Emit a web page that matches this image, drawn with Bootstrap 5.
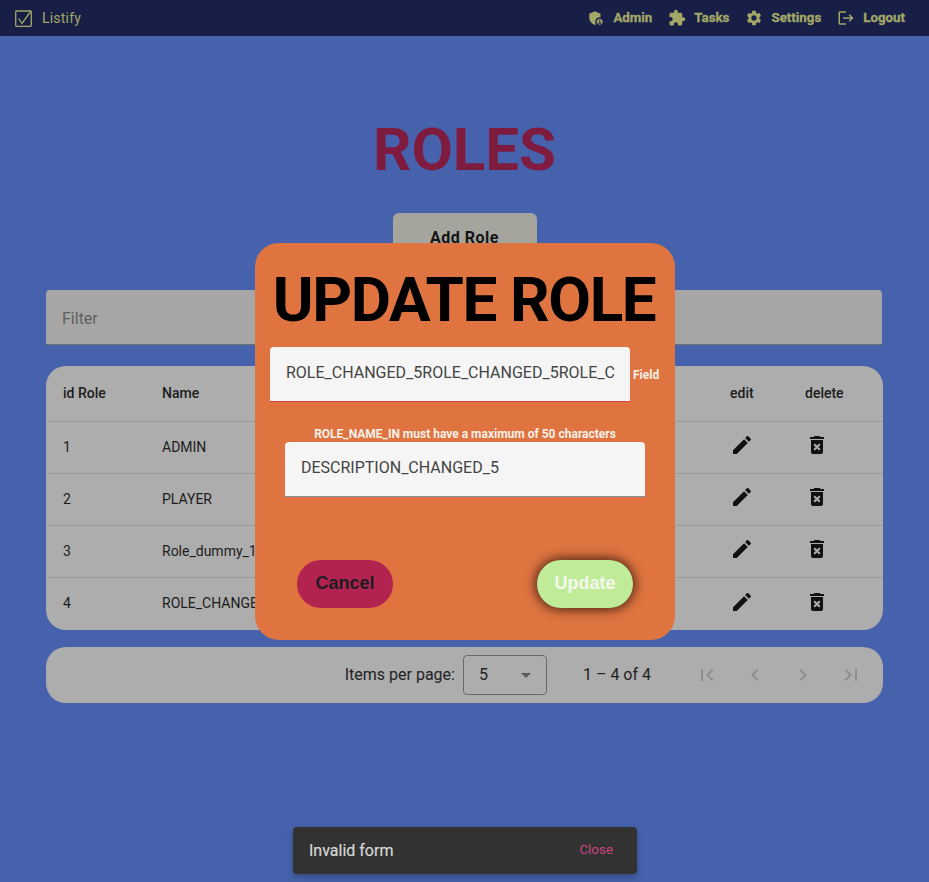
<!DOCTYPE html>
<html lang="en">
<head>
    <meta charset="UTF-8">
    <meta name="viewport" content="width=device-width, initial-scale=1.0">
    <title>Listify</title>
    <link href="https://cdn.jsdelivr.net/npm/bootstrap@5.3.0/dist/css/bootstrap.min.css" rel="stylesheet">
    <style>
        body {
            background-color: #4662ac;
            font-family: Roboto, sans-serif;
            color: #141414;
            height: 882px;
            overflow: hidden;
        }
        .top-bar {
            background-color: #171f47;
            height: 36px;
            padding: 0 24px 0 15px;
            color: #a3a768;
        }
        .brand-text { font-size: 14px; margin-left: 10px; letter-spacing: .2px; }
        .top-link { font-size: 13.3px; font-weight: 700; color: #a3a768; text-decoration: none; gap: 8px; -webkit-text-stroke: .3px #a3a768; }
        .top-link svg { width: 18px; height: 18px; fill: #a3a768; }
        .top-links { gap: 16px; }
        .page-wrap { padding: 0 46px; }
        .page-title {
            font-size: 60px;
            font-weight: 700;
            color: #7e1b3f;
            line-height: 70px;
            margin: 79px 0 28px;
        }
        .add-btn {
            width: 144px;
            height: 50px;
            background-color: #a5a59d;
            border: 0;
            border-radius: 6px;
            font-weight: 700;
            font-size: 16px;
            color: #141414;
            letter-spacing: .5px;
        }
        .filter-box {
            width: 836px;
            height: 55px;
            margin-top: 27px;
            background-color: #a6a6a6;
            border-bottom: 1px solid #6f6f6f;
            border-radius: 4px 4px 0 0;
            padding: 3px 16px 0;
            font-size: 16px;
            color: #5f5f5f;
        }
        .roles-table {
            margin: 21px 0 17px;
            background-color: #adadad;
            border-radius: 20px;
            overflow: hidden;
            width: 837px;
        }
        .roles-table table { margin: 0; font-size: 14px; table-layout: fixed; --bs-table-bg: transparent; --bs-table-color: #1c1c1c; }
        .roles-table th { font-weight: 500; height: 55px; }
        .roles-table td { height: 52px; }
        .roles-table th, .roles-table td { padding: 0 0 0 17px; vertical-align: middle; border-color: #9a9a9a; }
        .roles-table tr:last-child td { border-bottom: 0; height: 53px; }
        .row-icon { width: 24px; height: 24px; fill: #111; display: block; margin-top: -5px; }
        .roles-table tr:last-child .row-icon { margin-top: -4px; }
        .pager-bar {
            width: 837px;
            height: 56px;
            background-color: #adadad;
            border-radius: 20px;
            font-size: 16px;
            padding-right: 20px;
            color: #222;
        }
        .page-size {
            width: 84px;
            height: 40px;
            border: 1px solid #6b6b6b;
            border-radius: 4px;
            margin: 0 36px 0 8px;
            padding: 0 15px;
        }
        .page-caret { border-left: 5px solid transparent; border-right: 5px solid transparent; border-top: 5px solid #5a5a5a; }
        .page-icons { gap: 24px; margin-left: 44px; }
        .page-icons svg { width: 24px; height: 24px; fill: #8e8e8e; display: block; }
        .update-dialog {
            position: absolute;
            left: 255px;
            top: 243px;
            width: 420px;
            height: 397px;
            background-color: #df7440;
            border-radius: 24px;
            padding: 0 15px;
        }
        .dialog-title {
            font-size: 62px;
            font-weight: 700;
            letter-spacing: -1.4px;
            color: #000;
            line-height: 78px;
            margin: 18px 2px 8px 0;
            white-space: nowrap;
        }
        .field-box {
            width: 360px;
            height: 55px;
            background-color: #f5f5f5;
            border-radius: 4px 4px 0 0;
            padding: 0 16px 2px;
            font-size: 16px;
            color: #444;
            overflow: hidden;
            white-space: nowrap;
        }
        .field-name { border-bottom: 1px solid #d6413a; }
        .field-desc { border-bottom: 1px solid #7f8fa6; margin-left: 15px; }
        .field-hint { font-size: 12px; font-weight: 700; color: #f7f0e8; margin: 0 0 0 3px; }
        .field-error { font-size: 12px; font-weight: 700; color: #f7f0e8; text-align: center; margin-top: 26px; line-height: 13px; height: 13px; margin-bottom: 1px; }
        .dialog-actions { padding: 0 27px; margin-top: 63px; }
        .pill-btn {
            width: 96px;
            height: 48px;
            border: 0;
            border-radius: 24px;
            font-family: "Liberation Sans", Arial, sans-serif;
            font-size: 18px;
            font-weight: 700;
            padding: 0 0 2px;
        }
        .pill-cancel { background-color: #b32350; color: #1c1c24; }
        .pill-update { background-color: #c0ec99; color: #f4f8ec; box-shadow: 0 0 11px 2px rgba(40, 20, 10, .8); }
        .snack-bar {
            position: absolute;
            left: 293px;
            top: 827px;
            width: 344px;
            height: 47px;
            background-color: #323232;
            border-radius: 4px;
            padding: 0 24px 0 16px;
            box-shadow: 0 3px 6px rgba(0, 0, 0, .25);
            color: #d8d8d8;
            font-size: 16px;
        }
        .snack-bar > span:first-child { -webkit-text-stroke: .2px #d8d8d8; }
        .snack-close { font-size: 13.4px; color: #cb4480; }
    </style>
</head>
<body>
    <nav class="top-bar d-flex align-items-center justify-content-between">
        <div class="d-flex align-items-center">
            <svg width="17" height="17" viewBox="0 0 17 17" fill="none" stroke="#a3a768" stroke-width="1.3">
                <rect x=".7" y="1" width="15.6" height="15.3" rx="1"/>
                <path d="M3.5 8.5l3.5 5L16 1"/>
            </svg>
            <span class="brand-text">Listify</span>
        </div>
        <div class="top-links d-flex align-items-center">
            <a class="top-link d-flex align-items-center" href="#">
                <svg viewBox="0 0 24 24"><path d="M17 11c.34 0 .67.04 1 .09V6.27L10.5 3 3 6.27v4.91c0 4.54 3.2 8.79 7.5 9.82.55-.13 1.08-.32 1.6-.55-.69-.98-1.1-2.17-1.1-3.45 0-3.31 2.69-6 6-6z"/><path d="M17 13c-2.21 0-4 1.79-4 4s1.79 4 4 4 4-1.79 4-4-1.79-4-4-4zm0 1.38c.62 0 1.12.51 1.12 1.12s-.51 1.12-1.12 1.12-1.12-.51-1.12-1.12.5-1.12 1.12-1.12zm0 5.37c-.93 0-1.74-.46-2.24-1.17.05-.72 1.51-1.08 2.24-1.08s2.19.36 2.24 1.08c-.5.71-1.31 1.17-2.24 1.17z"/></svg>
                Admin
            </a>
            <a class="top-link d-flex align-items-center" href="#">
                <svg viewBox="0 0 24 24"><path d="M20.5 11H19V7c0-1.1-.9-2-2-2h-4V3.5C13 2.12 11.88 1 10.5 1S8 2.12 8 3.5V5H4c-1.1 0-1.99.9-1.99 2v3.8H3.5c1.49 0 2.7 1.21 2.7 2.7s-1.21 2.7-2.7 2.7H2V20c0 1.1.9 2 2 2h3.8v-1.5c0-1.49 1.21-2.7 2.7-2.7 1.49 0 2.7 1.21 2.7 2.7V22H17c1.1 0 2-.9 2-2v-4h1.5c1.38 0 2.5-1.12 2.5-2.5S21.88 11 20.5 11z"/></svg>
                Tasks
            </a>
            <a class="top-link d-flex align-items-center" href="#">
                <svg viewBox="0 0 24 24"><path d="M19.14 12.94c.04-.3.06-.61.06-.94 0-.32-.02-.64-.07-.94l2.03-1.58c.18-.14.23-.41.12-.61l-1.92-3.32c-.12-.22-.37-.29-.59-.22l-2.39.96c-.5-.38-1.03-.7-1.62-.94l-.36-2.54c-.04-.24-.24-.41-.48-.41h-3.84c-.24 0-.43.17-.47.41l-.36 2.54c-.59.24-1.13.57-1.62.94l-2.39-.96c-.22-.08-.47 0-.59.22L2.74 8.87c-.12.21-.08.47.12.61l2.03 1.58c-.05.3-.09.63-.09.94s.02.64.07.94l-2.03 1.58c-.18.14-.23.41-.12.61l1.92 3.32c.12.22.37.29.59.22l2.39-.96c.5.38 1.03.7 1.62.94l.36 2.54c.05.24.24.41.48.41h3.84c.24 0 .44-.17.47-.41l.36-2.54c.59-.24 1.13-.56 1.62-.94l2.39.96c.22.08.47 0 .59-.22l1.92-3.32c.12-.22.07-.47-.12-.61l-2.01-1.58zM12 15.6c-1.98 0-3.6-1.62-3.6-3.6s1.62-3.6 3.6-3.6 3.6 1.62 3.6 3.6-1.62 3.6-3.6 3.6z"/></svg>
                Settings
            </a>
            <a class="top-link d-flex align-items-center" href="#">
                <svg viewBox="0 0 24 24"><path d="M17 7l-1.41 1.41L18.17 11H8v2h10.17l-2.58 2.58L17 17l5-5zM4 5h8V3H4c-1.1 0-2 .9-2 2v14c0 1.1.9 2 2 2h8v-2H4V5z"/></svg>
                Logout
            </a>
        </div>
    </nav>

    <div class="page-wrap">
        <h1 class="page-title text-center">ROLES</h1>
        <div class="text-center"><button class="add-btn">Add Role</button></div>
        <div class="filter-box d-flex align-items-center">Filter</div>
        <div class="roles-table">
            <table class="table">
                <colgroup>
                    <col style="width: 99px"><col style="width: 568px"><col style="width: 75px"><col>
                </colgroup>
                <thead>
                    <tr><th>id Role</th><th>Name</th><th>edit</th><th>delete</th></tr>
                </thead>
                <tbody>
                    <tr>
                        <td>1</td><td>ADMIN</td>
                        <td><svg class="row-icon" viewBox="0 0 24 24"><path d="M3 17.25V21h3.75L17.81 9.94l-3.75-3.75L3 17.25zM20.71 7.04c.39-.39.39-1.02 0-1.41l-2.34-2.34c-.39-.39-1.02-.39-1.41 0l-1.83 1.83 3.75 3.75 1.83-1.83z"/></svg></td>
                        <td><svg class="row-icon" viewBox="0 0 24 24"><path d="M6 19c0 1.1.9 2 2 2h8c1.1 0 2-.9 2-2V7H6v12zm2.46-7.12l1.41-1.41L12 12.59l2.12-2.12 1.41 1.41L13.41 14l2.12 2.12-1.41 1.41L12 15.41l-2.12 2.12-1.41-1.41L10.59 14l-2.13-2.12zM15.5 4l-1-1h-5l-1 1H5v2h14V4z"/></svg></td>
                    </tr>
                    <tr>
                        <td>2</td><td>PLAYER</td>
                        <td><svg class="row-icon" viewBox="0 0 24 24"><path d="M3 17.25V21h3.75L17.81 9.94l-3.75-3.75L3 17.25zM20.71 7.04c.39-.39.39-1.02 0-1.41l-2.34-2.34c-.39-.39-1.02-.39-1.41 0l-1.83 1.83 3.75 3.75 1.83-1.83z"/></svg></td>
                        <td><svg class="row-icon" viewBox="0 0 24 24"><path d="M6 19c0 1.1.9 2 2 2h8c1.1 0 2-.9 2-2V7H6v12zm2.46-7.12l1.41-1.41L12 12.59l2.12-2.12 1.41 1.41L13.41 14l2.12 2.12-1.41 1.41L12 15.41l-2.12 2.12-1.41-1.41L10.59 14l-2.13-2.12zM15.5 4l-1-1h-5l-1 1H5v2h14V4z"/></svg></td>
                    </tr>
                    <tr>
                        <td>3</td><td>Role_dummy_1</td>
                        <td><svg class="row-icon" viewBox="0 0 24 24"><path d="M3 17.25V21h3.75L17.81 9.94l-3.75-3.75L3 17.25zM20.71 7.04c.39-.39.39-1.02 0-1.41l-2.34-2.34c-.39-.39-1.02-.39-1.41 0l-1.83 1.83 3.75 3.75 1.83-1.83z"/></svg></td>
                        <td><svg class="row-icon" viewBox="0 0 24 24"><path d="M6 19c0 1.1.9 2 2 2h8c1.1 0 2-.9 2-2V7H6v12zm2.46-7.12l1.41-1.41L12 12.59l2.12-2.12 1.41 1.41L13.41 14l2.12 2.12-1.41 1.41L12 15.41l-2.12 2.12-1.41-1.41L10.59 14l-2.13-2.12zM15.5 4l-1-1h-5l-1 1H5v2h14V4z"/></svg></td>
                    </tr>
                    <tr>
                        <td>4</td><td>ROLE_CHANGED_5</td>
                        <td><svg class="row-icon" viewBox="0 0 24 24"><path d="M3 17.25V21h3.75L17.81 9.94l-3.75-3.75L3 17.25zM20.71 7.04c.39-.39.39-1.02 0-1.41l-2.34-2.34c-.39-.39-1.02-.39-1.41 0l-1.83 1.83 3.75 3.75 1.83-1.83z"/></svg></td>
                        <td><svg class="row-icon" viewBox="0 0 24 24"><path d="M6 19c0 1.1.9 2 2 2h8c1.1 0 2-.9 2-2V7H6v12zm2.46-7.12l1.41-1.41L12 12.59l2.12-2.12 1.41 1.41L13.41 14l2.12 2.12-1.41 1.41L12 15.41l-2.12 2.12-1.41-1.41L10.59 14l-2.13-2.12zM15.5 4l-1-1h-5l-1 1H5v2h14V4z"/></svg></td>
                    </tr>
                </tbody>
            </table>
        </div>
        <div class="pager-bar d-flex align-items-center justify-content-end">
            <span>Items per page:</span>
            <div class="page-size d-flex align-items-center justify-content-between"><span>5</span><span class="page-caret"></span></div>
            <span>1 – 4 of 4</span>
            <div class="page-icons d-flex">
                <svg viewBox="0 0 24 24"><path d="M18.41 16.59L13.82 12l4.59-4.59L17 6l-6 6 6 6zM6 6h2v12H6z"/></svg>
                <svg viewBox="0 0 24 24"><path d="M15.41 7.41L14 6l-6 6 6 6 1.41-1.41L10.83 12z"/></svg>
                <svg viewBox="0 0 24 24"><path d="M10 6L8.59 7.41 13.17 12l-4.58 4.59L10 18l6-6z"/></svg>
                <svg viewBox="0 0 24 24"><path d="M5.59 7.41L10.18 12l-4.59 4.59L7 18l6-6-6-6zM16 6h2v12h-2z"/></svg>
            </div>
        </div>
    </div>

    <div class="update-dialog">
        <h2 class="dialog-title text-center">UPDATE ROLE</h2>
        <div class="d-flex align-items-center">
            <div class="field-box field-name d-flex align-items-center">ROLE_CHANGED_5ROLE_CHANGED_5ROLE_C</div>
            <span class="field-hint">Field</span>
        </div>
        <div class="field-error">ROLE_NAME_IN must have a maximum of 50 characters</div>
        <div class="field-box field-desc d-flex align-items-center">DESCRIPTION_CHANGED_5</div>
        <div class="dialog-actions d-flex justify-content-between">
            <button class="pill-btn pill-cancel">Cancel</button>
            <button class="pill-btn pill-update">Update</button>
        </div>
    </div>

    <div class="snack-bar d-flex align-items-center justify-content-between">
        <span>Invalid form</span>
        <span class="snack-close">Close</span>
    </div>

    <script src="https://cdn.jsdelivr.net/npm/bootstrap@5.3.0/dist/js/bootstrap.bundle.min.js"></script>
</body>
</html>
